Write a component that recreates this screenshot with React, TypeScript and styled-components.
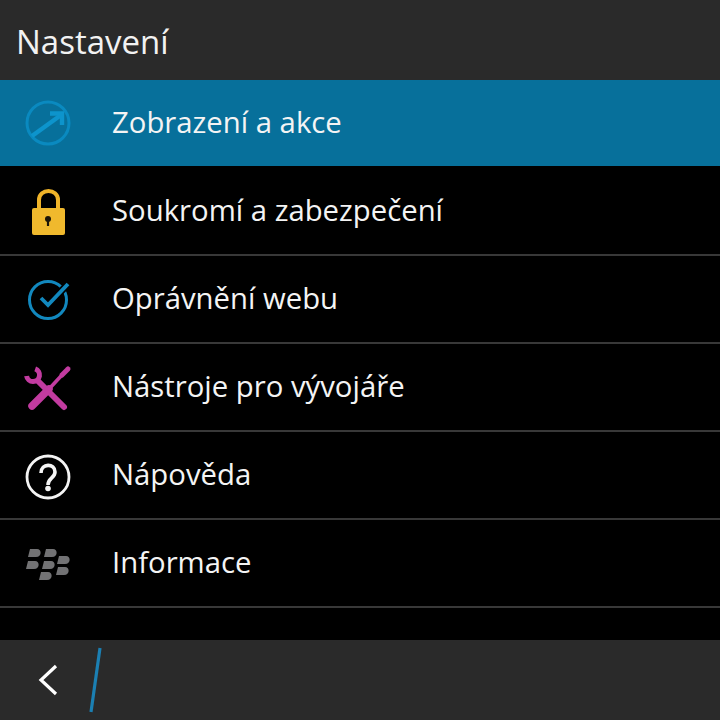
import styled, { createGlobalStyle } from "styled-components";

const GlobalStyle = createGlobalStyle`
  html, body {
    margin: 0;
    padding: 0;
    background: #000;
  }
`;

const ArrowIcon = () => (
  <svg width="60" height="60" viewBox="0 0 60 60" fill="none">
    <circle cx="30" cy="30" r="21" stroke="#0a8ac0" strokeWidth="3" />
    <path d="M14 43 L43 22" stroke="#0d94cc" strokeWidth="4.4" />
    <path d="M32 20.5 H44 V32" stroke="#0d94cc" strokeWidth="4.4" />
  </svg>
);

const LockIcon = () => (
  <svg width="60" height="60" viewBox="0 0 60 60" fill="none">
    <path d="M21 28 V19 C21 7 40 7 40 19 V28" stroke="#f0b429" strokeWidth="4" />
    <rect x="14" y="27" width="33" height="27" rx="2" fill="#f0b92d" />
    <circle cx="30" cy="38" r="3" fill="#1a1408" />
    <path d="M30 38 V45" stroke="#1a1408" strokeWidth="2.2" />
  </svg>
);

const CheckIcon = () => (
  <svg width="60" height="60" viewBox="0 0 60 60" fill="none">
    <circle cx="30" cy="31" r="18.5" stroke="#1288be" strokeWidth="3" />
    <path d="M23 29 L30 36 L50 15" stroke="#000" strokeWidth="7" />
    <path d="M23 29 L30 36 L50 15" stroke="#1288be" strokeWidth="3.8" />
  </svg>
);

const ToolsIcon = () => (
  <svg width="60" height="60" viewBox="0 0 60 60" fill="none" strokeLinecap="round">
    <path d="M20 24 L46 50" stroke="#c23ba0" strokeWidth="6" />
    <path d="M17.2 11.9 A6.5 6.5 0 1 1 8.6 19" stroke="#c23ba0" strokeWidth="5" strokeLinecap="butt" />
    <path d="M14 49 L31 32" stroke="#c23ba0" strokeWidth="7.5" />
    <path d="M31 32 L44 18" stroke="#c23ba0" strokeWidth="3.6" />
    <path d="M44 18 L50 12" stroke="#c23ba0" strokeWidth="5" />
  </svg>
);

const HelpIcon = () => (
  <svg width="60" height="60" viewBox="0 0 60 60" fill="none">
    <circle cx="30" cy="32" r="21" stroke="#f4f4f4" strokeWidth="2.8" />
    <path d="M23 28 C23 18 37 18 37 27 C37 33 30 33 30 40" stroke="#f4f4f4" strokeWidth="3.6" />
    <circle cx="30" cy="43.5" r="2.8" fill="#f4f4f4" />
  </svg>
);

const drops = [
  [10, 16],
  [26, 16],
  [39, 23],
  [24, 28],
  [8, 28],
  [38, 34],
  [21, 39],
];

const BerryIcon = () => (
  <svg width="60" height="60" viewBox="0 0 60 60" fill="#727274">
    {drops.map(([x, y]) => (
      <path
        key={`${x}-${y}`}
        transform={`translate(${x} ${y})`}
        d="M2 0 H9 C14 0 14 8 8 8 H0 Z"
      />
    ))}
  </svg>
);

const items = [
  { label: "Zobrazení a akce", icon: <ArrowIcon />, active: true },
  { label: "Soukromí a zabezpečení", icon: <LockIcon /> },
  { label: "Oprávnění webu", icon: <CheckIcon /> },
  { label: "Nástroje pro vývojáře", icon: <ToolsIcon /> },
  { label: "Nápověda", icon: <HelpIcon /> },
  { label: "Informace", icon: <BerryIcon /> },
];

const App = () => {
  return (
    <Screen>
      <GlobalStyle />
      <Header>Nastavení</Header>
      <List>
        {items.map((item) => (
          <Row key={item.label} $active={item.active}>
            <IconBox>{item.icon}</IconBox>
            <Label>{item.label}</Label>
          </Row>
        ))}
      </List>
      <Footer>
        <svg width="24" height="32" viewBox="0 0 24 32" fill="none">
          <path d="M19 2 L4 16 L19 30" stroke="#fff" strokeWidth="3.2" />
        </svg>
        <svg width="14" height="66" viewBox="0 0 14 66" fill="none">
          <path d="M11 1 L2 65" stroke="#1b7fb2" strokeWidth="3.2" />
        </svg>
      </Footer>
    </Screen>
  );
};

export default App;

const Screen = styled.div`
  width: 720px;
  height: 720px;
  display: flex;
  flex-direction: column;
  background: #000;
  overflow: hidden;
  font-family: "Open Sans", "Noto Sans", sans-serif;
`;

const Header = styled.div`
  height: 80px;
  flex: none;
  display: flex;
  align-items: center;
  padding-left: 16px;
  padding-top: 2px;
  box-sizing: border-box;
  background: #2a2a2a;
  color: #f2f2f2;
  font-size: 33px;
`;

const List = styled.div`
  flex: 1;
  display: flex;
  flex-direction: column;
`;

const Row = styled.div<{ $active?: boolean }>`
  height: 88px;
  box-sizing: border-box;
  display: flex;
  align-items: center;
  padding-left: 18px;
  gap: 34px;
  background: ${(p) => (p.$active ? "#07709b" : "#000")};
  border-bottom: 2px solid ${(p) => (p.$active ? "#000" : "#383838")};
`;

const IconBox = styled.div`
  width: 60px;
  height: 60px;
  flex: none;

  svg {
    display: block;
  }
`;

const Label = styled.span`
  color: #f4f4f4;
  font-size: 29.3px;
  padding-bottom: 2px;
`;

const Footer = styled.div`
  height: 80px;
  flex: none;
  display: flex;
  align-items: center;
  gap: 28px;
  padding-left: 37px;
  box-sizing: border-box;
  background: #2a2a2a;
`;
